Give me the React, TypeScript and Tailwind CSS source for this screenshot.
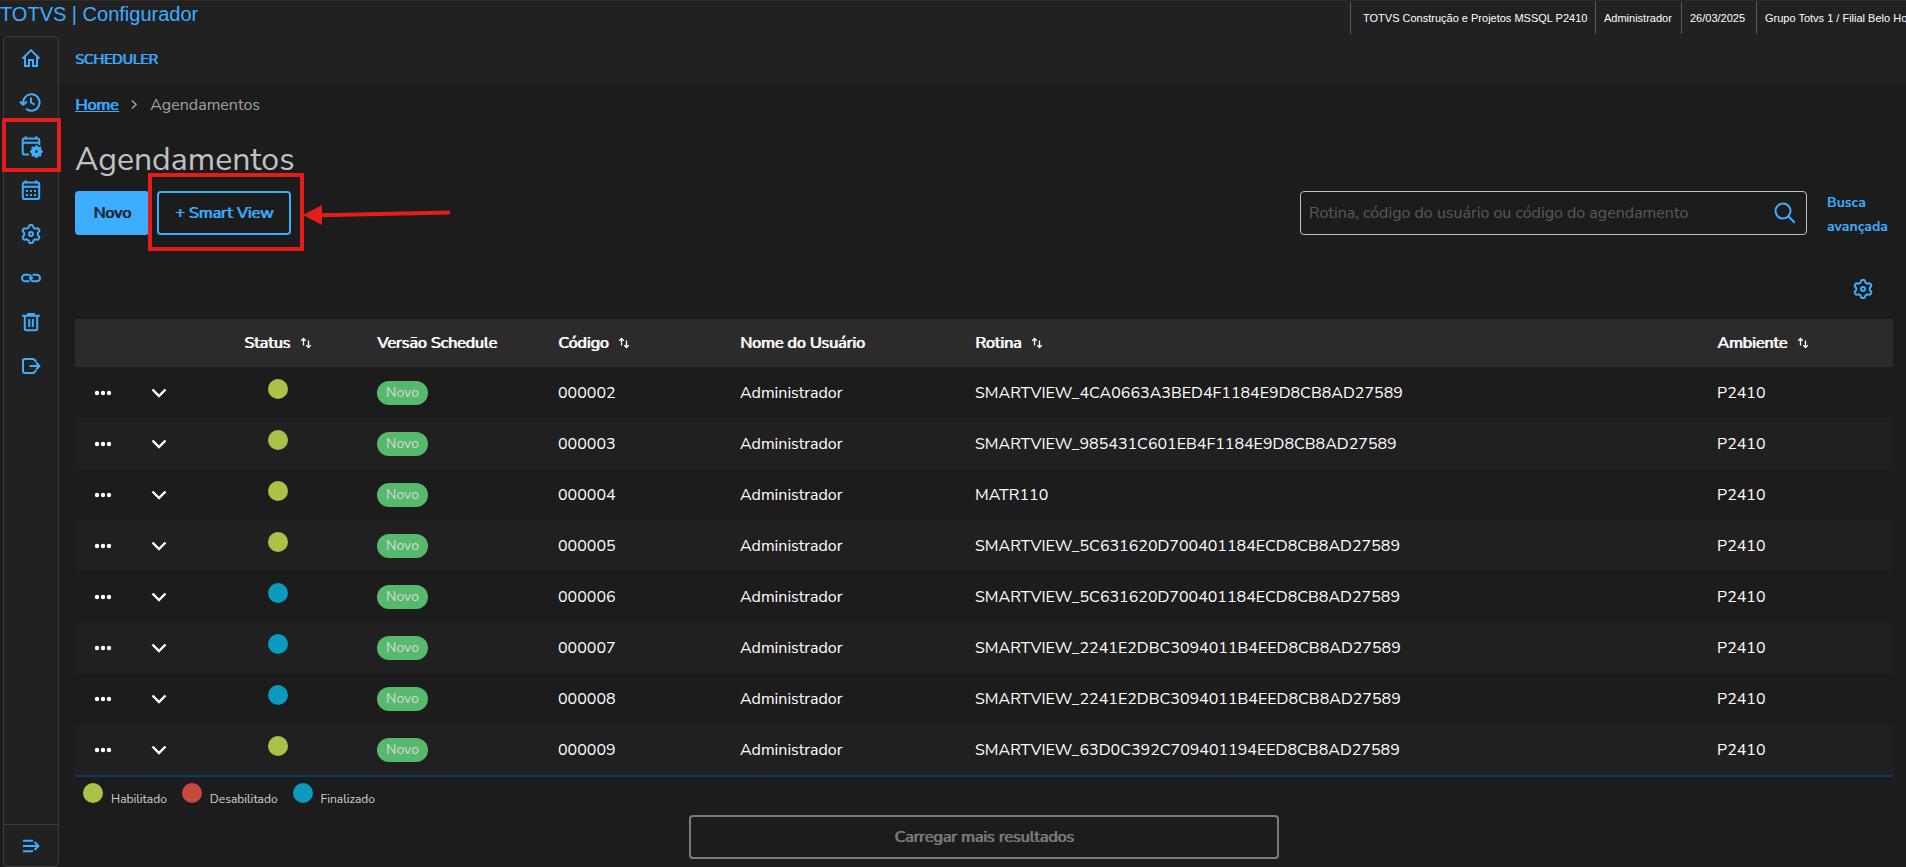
import type { ReactNode } from "react";

type Status = "Habilitado" | "Desabilitado" | "Finalizado";

const statusColor: Record<Status, string> = {
  Habilitado: "bg-[#abc249]",
  Desabilitado: "bg-[#c64840]",
  Finalizado: "bg-[#0c9abe]",
};

const rows: { codigo: string; status: Status; rotina: string }[] = [
  { codigo: "000002", status: "Habilitado", rotina: "SMARTVIEW_4CA0663A3BED4F1184E9D8CB8AD27589" },
  { codigo: "000003", status: "Habilitado", rotina: "SMARTVIEW_985431C601EB4F1184E9D8CB8AD27589" },
  { codigo: "000004", status: "Habilitado", rotina: "MATR110" },
  { codigo: "000005", status: "Habilitado", rotina: "SMARTVIEW_5C631620D700401184ECD8CB8AD27589" },
  { codigo: "000006", status: "Finalizado", rotina: "SMARTVIEW_5C631620D700401184ECD8CB8AD27589" },
  { codigo: "000007", status: "Finalizado", rotina: "SMARTVIEW_2241E2DBC3094011B4EED8CB8AD27589" },
  { codigo: "000008", status: "Finalizado", rotina: "SMARTVIEW_2241E2DBC3094011B4EED8CB8AD27589" },
  { codigo: "000009", status: "Habilitado", rotina: "SMARTVIEW_63D0C392C709401194EED8CB8AD27589" },
];

// closed outline of a gear with rounded teeth
function gearPath(cx: number, cy: number, r: number, depth: number, teeth: number) {
  const pts: string[] = [];
  for (let i = 0; i < 120; i++) {
    const a = (i / 120) * Math.PI * 2;
    const rr = r + depth * Math.tanh(2 * Math.cos(teeth * a));
    pts.push(`${(cx + rr * Math.sin(a)).toFixed(2)} ${(cy - rr * Math.cos(a)).toFixed(2)}`);
  }
  return `M${pts.join("L")}Z`;
}

function Icon({ children }: { children: ReactNode }) {
  return (
    <svg
      className="size-6 shrink-0"
      viewBox="0 0 24 24"
      fill="none"
      stroke="currentColor"
      strokeWidth="2"
      strokeLinejoin="round"
      aria-hidden="true"
    >
      {children}
    </svg>
  );
}

function GearIcon() {
  return (
    <Icon>
      <path d={gearPath(12, 12, 7.9, 1.2, 6)} />
      <circle cx="12" cy="12" r="2" />
    </Icon>
  );
}

function SortIcon() {
  return (
    <svg className="size-3 shrink-0" viewBox="0 0 12 12" fill="none" stroke="currentColor" strokeWidth="1.3" aria-hidden="true">
      <path d="M3.5 8.5v-7M1.3 3.7l2.2-2.2 2.2 2.2M8.500 3.5v7M6.3 8.3l2.2 2.2 2.2-2.2" />
    </svg>
  );
}

const menu: { label: string; icon: ReactNode; marked?: boolean }[] = [
  {
    label: "Início",
    icon: (
      <Icon>
        <path strokeLinejoin="miter" d="M3.5 12.6 12 4.1l8.5 8.5M6 10.5V20h4v-6h4v6h4v-9.5" />
      </Icon>
    ),
  },
  {
    label: "Histórico",
    icon: (
      <Icon>
        <path d="M4.300 14A8.200 8.200 0 1 1 7 18.700M12 7.500v5l3.500 2.200" />
        <path d="M.8 11.500 4.200 14.800 8 11.500" />
      </Icon>
    ),
  },
  {
    label: "Agendamentos",
    marked: true,
    icon: (
      <Icon>
        <path d="M10 20.5H5.5a1.8 1.8 0 0 1-1.8-1.8V6.3a1.8 1.8 0 0 1 1.8-1.8h13a1.8 1.8 0 0 1 1.8 1.8V11M3.7 8.8h16.5M6.7 2.3v3M17.3 2.3v3" />
        <path
          fill="currentColor"
          stroke="none"
          fillRule="evenodd"
          d={gearPath(17.4, 17.6, 5.9, 0.6, 8) + "M16 17.6a1.4 1.4 0 1 0 2.8 0a1.4 1.4 0 1 0-2.8 0Z"}
        />
      </Icon>
    ),
  },
  {
    label: "Calendário",
    icon: (
      <Icon>
        <rect x="3.8" y="4.5" width="16.4" height="16.5" rx="1.8" />
        <path d="M3.8 8.8h16.4M6.7 2.3v3M17.3 2.3v3" />
        <path strokeDasharray="2 2" d="M7 13h10.5M7 17h10.5" />
      </Icon>
    ),
  },
  { label: "Configurações", icon: <GearIcon /> },
  {
    label: "Vínculos",
    icon: (
      <Icon>
        <path d="M10.5 15.3H6.3a3.3 3.3 0 0 1 0-6.6h3.2c1.500 0 2.400 1 3 2.200l.8 2.200" />
        <path d="M13.500 8.700h4.200a3.300 3.300 0 0 1 0 6.600h-3.200c-1.500 0-2.400-1-3-2.200l-.8-2.200" />
      </Icon>
    ),
  },
  {
    label: "Excluir",
    icon: (
      <Icon>
        <path d="M3.2 5.8h17.6M9 5V4h6v1M5.8 6v12.6a1.6 1.6 0 0 0 1.6 1.6h9.2a1.6 1.6 0 0 0 1.6-1.6V6M10.2 9v8M13.800 9v8" />
      </Icon>
    ),
  },
  {
    label: "Sair",
    icon: (
      <Icon>
        <path d="M16.500 8V6.800L14.500 5H5.800A1.800 1.800 0 0 0 4 6.800v10.400A1.800 1.800 0 0 0 5.800 19h8.700l2-1.800V16M10.500 12h10M17 8.500l3.500 3.500-3.500 3.500" />
      </Icon>
    ),
  },
];

function Sidebar() {
  return (
    <aside className="mt-px ml-[3px] flex w-14 shrink-0 flex-col rounded border border-[#3c3c3c] bg-[#212121] text-[#3dadff]">
      <nav className="-mt-px flex flex-col">
        {menu.map((item) => (
          <a key={item.label} href="#" aria-label={item.label} className="relative flex h-11 items-center justify-center">
            {item.icon}
            {item.marked && <span className="absolute -top-1.5 -left-0.5 h-[54px] w-[59px] border-4 border-[#e51c1c]" />}
          </a>
        ))}
      </nav>
      <button aria-label="Expandir menu" className="mt-auto flex h-[42px] items-center justify-center border-t border-[#3c3c3c]">
        <Icon>
          <path d="M4 6.7h10M4 12h15.5M4 17.3h10M15.500 8l4 4-4 4" />
        </Icon>
      </button>
    </aside>
  );
}

function Th({ children, sort, center }: { children?: ReactNode; sort?: boolean; center?: boolean }) {
  return (
    <th className={center ? "pl-2 font-normal" : "px-4 text-left font-normal"}>
      <span className="inline-flex items-center gap-2.5 whitespace-nowrap">
        <span className="[text-shadow:1px_0_currentColor]">{children}</span>
        {sort && <SortIcon />}
      </span>
    </th>
  );
}

function ScheduleTable() {
  return (
    <table className="w-full table-fixed border-separate border-spacing-0 border-b-2 border-[#053e62] text-base text-white">
      <colgroup>
        <col className="w-14" />
        <col className="w-14" />
        <col className="w-[174px]" />
        <col className="w-[181px]" />
        <col className="w-[182px]" />
        <col className="w-[235px]" />
        <col />
        <col className="w-[192px]" />
      </colgroup>
      <thead>
        <tr className="h-12 bg-[#2b2b2b]">
          <Th />
          <Th />
          <Th sort center>Status</Th>
          <Th>Versão Schedule</Th>
          <Th sort>Código</Th>
          <Th>Nome do Usuário</Th>
          <Th sort>Rotina</Th>
          <Th sort>Ambiente</Th>
        </tr>
      </thead>
      <tbody>
        {rows.map((row) => (
          <tr key={row.codigo} className="h-[51px] even:bg-[#202020]">
            <td>
              <button aria-label="Ações" className="mx-auto block">
                <svg className="h-6 w-5" viewBox="0 0 20 24" fill="currentColor" aria-hidden="true">
                  <circle cx="4" cy="12" r="2.2" />
                  <circle cx="10" cy="12" r="2.2" />
                  <circle cx="16" cy="12" r="2.2" />
                </svg>
              </button>
            </td>
            <td>
              <button aria-label="Detalhes" className="mx-auto block">
                <svg className="size-6" viewBox="0 0 24 24" fill="none" stroke="currentColor" strokeWidth="2.4" aria-hidden="true">
                  <path d="m5.5 8.500 6.500 6.500L18.500 8.500" />
                </svg>
              </button>
            </td>
            <td className="pb-2 pl-2">
              <span className={`mx-auto block size-5 rounded-full ${statusColor[row.status]}`} />
            </td>
            <td className="px-4">
              <span className="flex h-6 w-[51px] items-center justify-center rounded-full bg-[#56b96b] text-sm text-[#d9d9d9]">Novo</span>
            </td>
            <td className="px-4">{row.codigo}</td>
            <td className="px-4">Administrador</td>
            <td className="px-4">{row.rotina}</td>
            <td className="px-4">P2410</td>
          </tr>
        ))}
      </tbody>
    </table>
  );
}

export default function App() {
  return (
    <div className="flex min-h-screen flex-col overflow-hidden bg-[#1c1c1c] font-['Nunito_Sans','Noto_Sans',sans-serif]">
      <header className="flex h-[35px] justify-between border-t border-[#2b2b2b] bg-[#212121] font-['Liberation_Sans',Arial,sans-serif]">
        <h1 className="text-xl leading-[26px] text-[#3dadff]">TOTVS | Configurador</h1>
        <div className="flex items-stretch py-px text-[11px] whitespace-nowrap text-white">
          <span className="flex w-[245px] items-center border-l border-[#5a5a5a] pl-3">TOTVS Construção e Projetos MSSQL P2410</span>
          <span className="flex w-[86px] items-center border-l border-[#5a5a5a] pl-2">Administrador</span>
          <span className="flex w-[75px] items-center border-l border-[#5a5a5a] pl-2">26/03/2025</span>
          <span className="flex w-[150px] items-center border-l border-[#5a5a5a] pl-2">Grupo Totvs 1 / Filial Belo Ho</span>
        </div>
      </header>

      <div className="flex flex-1">
        <Sidebar />

        <main className="flex min-w-0 flex-1 flex-col">
          <div className="flex h-[49px] items-center bg-[#212121] pl-4">
            <a href="#" className="text-sm text-[#3dadff] [text-shadow:1px_0_currentColor]">SCHEDULER</a>
          </div>

          <div className="pr-[13px] pl-4">
            <nav aria-label="Breadcrumb" className="flex h-[42px] items-center text-base text-[#a1a1a1]">
              <a href="#" className="text-[#3dadff] underline [text-shadow:1px_0_currentColor]">Home</a>
              <svg className="mx-2.5 size-3" viewBox="0 0 12 12" fill="none" stroke="currentColor" strokeWidth="1.5" aria-hidden="true">
                <path d="m4 1.5 4 4-4 4" />
              </svg>
              <span>Agendamentos</span>
            </nav>

            <h2 className="mt-3.5 h-[51px] text-[32px] leading-10 text-[#c1c1c1]">Agendamentos</h2>

            <div className="flex items-start justify-between">
              <div className="flex gap-2">
                <button className="h-11 w-[74px] rounded bg-[#3dadff] text-base text-[#1c1c1c] [text-shadow:1px_0_currentColor]">Novo</button>
                <div className="relative">
                  <button className="h-11 w-[134px] rounded border-2 border-[#3dadff] text-base text-[#3dadff] [text-shadow:1px_0_currentColor]">
                    + Smart View
                  </button>
                  <span className="absolute -top-[18px] -left-[9px] h-[78px] w-[156px] border-4 border-[#e51c1c]" />
                  <svg className="absolute top-2.5 left-[146px] h-7 w-[150px]" viewBox="0 0 150 28" aria-hidden="true">
                    <path d="M0 14 19 4v20Z" fill="#e51c1c" />
                    <path d="M18 14.2 147 11.5" stroke="#e51c1c" strokeWidth="4" />
                  </svg>
                </div>
              </div>

              <div className="flex">
                <div className="relative">
                  <input
                    type="text"
                    aria-label="Buscar agendamento"
                    placeholder="Rotina, código do usuário ou código do agendamento"
                    className="h-11 w-[507px] rounded border border-[#c1c1c1] bg-transparent pr-12 pl-2 text-base text-white placeholder:text-[#5a5a5a]"
                  />
                  <button aria-label="Pesquisar" className="absolute top-2.5 right-2.5 text-[#3dadff]">
                    <Icon>
                      <circle cx="10" cy="10" r="7.5" />
                      <path d="m15.3 15.3 6.5 6.5" />
                    </Icon>
                  </button>
                </div>
                <a href="#" className="ml-5 w-[66px] text-sm leading-6 font-bold text-[#3dadff]">Busca avançada</a>
              </div>
            </div>

            <div className="flex justify-end pt-[38px] pr-[18px] pb-[18px]">
              <button aria-label="Gerenciar colunas" className="text-[#3dadff]">
                <GearIcon />
              </button>
            </div>

            <ScheduleTable />

            <div className="flex h-[38px] gap-[15px] pt-1.5 pl-2 text-xs text-[#d0d0d0]">
              {(Object.keys(statusColor) as Status[]).map((s) => (
                <span key={s} className="flex gap-2">
                  <i className={`size-5 rounded-full ${statusColor[s]}`} />
                  <span className="pt-2">{s}</span>
                </span>
              ))}
            </div>

            <div className="mx-auto w-1/3 px-2 pb-2">
              <button className="h-11 w-full rounded border-2 border-[#7c7c7c] text-base text-[#7c7c7c] [text-shadow:1px_0_currentColor]">
                Carregar mais resultados
              </button>
            </div>
          </div>
        </main>
      </div>
    </div>
  );
}
